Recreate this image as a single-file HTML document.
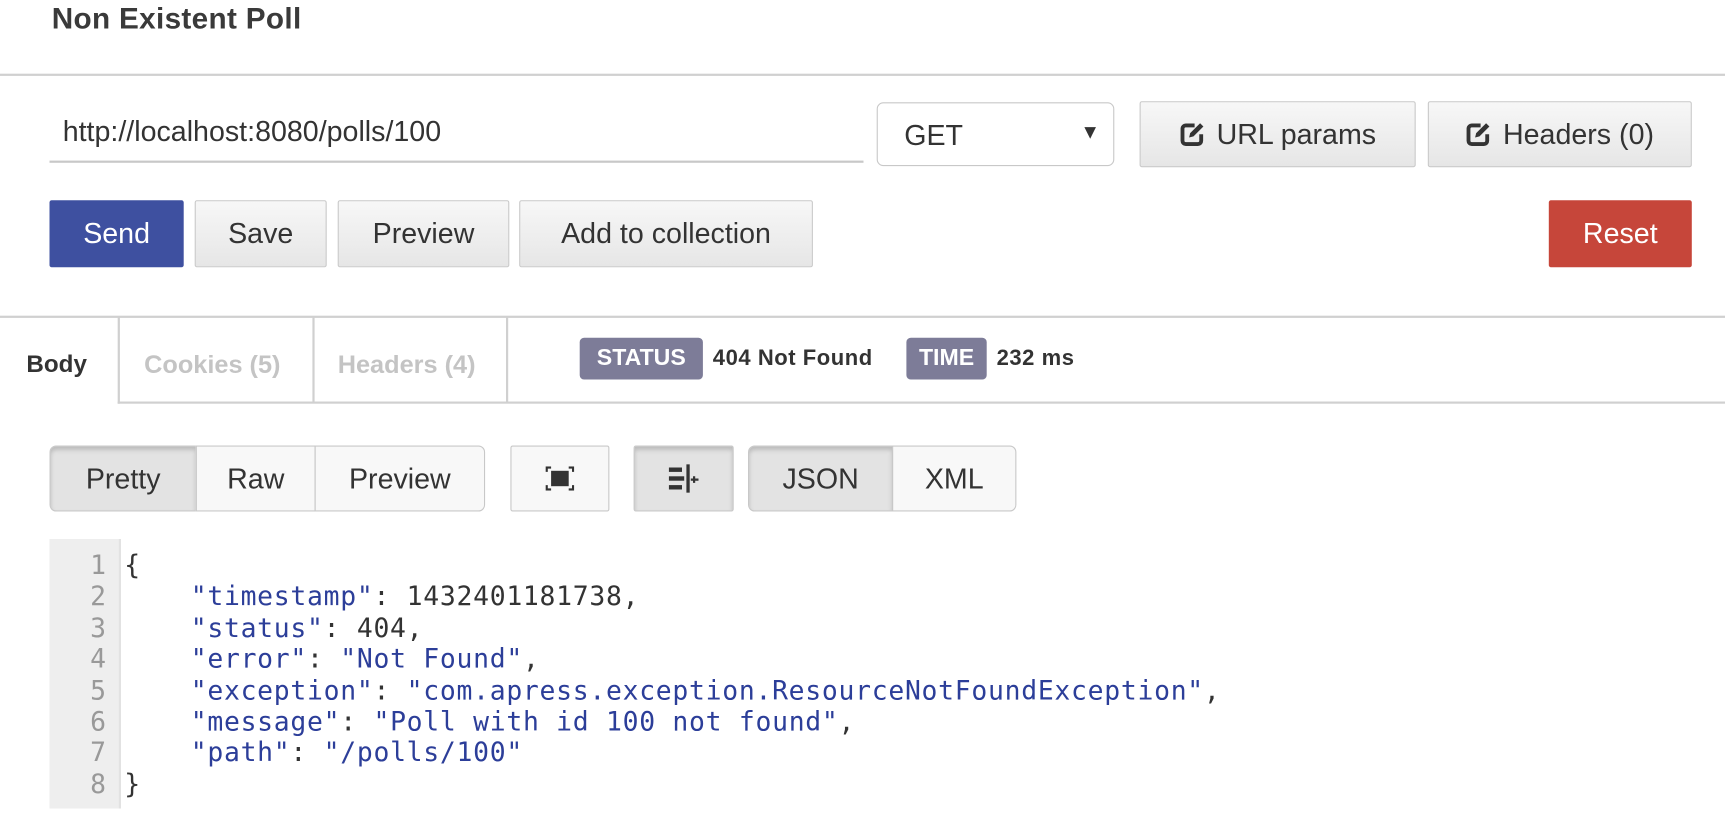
<!DOCTYPE html>
<html><head><meta charset="utf-8"><style>
*{box-sizing:border-box;margin:0;padding:0}
body{width:1725px;height:818px;background:#fff;font-family:"Liberation Sans",Arial,sans-serif;color:#333;position:relative;overflow:hidden}
#w{position:absolute;left:0;top:0;width:1569px;height:744px;transform:scale(1.1);transform-origin:0 0}
.a{position:absolute}
.btn{position:absolute;border:1px solid #c8c8c8;background:linear-gradient(#f7f7f7,#e6e6e6);font-size:26px;color:#333;display:flex;align-items:center;justify-content:center;border-radius:2px}
.hr{position:absolute;left:0;right:0;height:2px;background:#d0d0d0}
.code{font-family:"DejaVu Sans Mono","Liberation Mono",monospace;font-size:24px;letter-spacing:0.65px;line-height:28.4px;white-space:pre}
.k{color:#2c3e99}.n{color:#333}
</style></head><body><div id="w">
<div class="a" style="left:47px;top:2px;font-size:27px;font-weight:bold;color:#3a3a3a;letter-spacing:0.3px">Non Existent Poll</div>
<div class="hr" style="top:67px"></div>
<div class="a" style="left:57px;top:104px;font-size:26px;color:#333">http://localhost:8080/polls/100</div>
<div class="a" style="left:45px;top:146px;width:740px;height:2px;background:#c8c8c8"></div>
<div class="a" style="left:797px;top:93px;width:216px;height:58px;border:1px solid #c8c8c8;border-radius:6px;font-size:26px;padding:14px 0 0 24px">GET<span style="position:absolute;right:12px;top:16px;font-size:18px">▼</span></div>
<div class="btn" style="left:1036px;top:92px;width:251px;height:60px"><svg width="24" height="24" viewBox="0 0 24 24" style="margin-right:10px"><path d="M14 4H6a3 3 0 0 0-3 3v11a3 3 0 0 0 3 3h11a3 3 0 0 0 3-3v-6" fill="none" stroke="#333" stroke-width="3.5"/><path d="M9 15l1-4 9-9 3 3-9 9z" fill="#333"/></svg>URL params</div>
<div class="btn" style="left:1298px;top:92px;width:240px;height:60px"><svg width="24" height="24" viewBox="0 0 24 24" style="margin-right:10px"><path d="M14 4H6a3 3 0 0 0-3 3v11a3 3 0 0 0 3 3h11a3 3 0 0 0 3-3v-6" fill="none" stroke="#333" stroke-width="3.5"/><path d="M9 15l1-4 9-9 3 3-9 9z" fill="#333"/></svg>Headers (0)</div>
<div class="btn" style="left:45px;top:182px;width:122px;height:61px;background:#3e50a0;border-color:#3e50a0;color:#fff">Send</div>
<div class="btn" style="left:177px;top:182px;width:120px;height:61px">Save</div>
<div class="btn" style="left:307px;top:182px;width:156px;height:61px">Preview</div>
<div class="btn" style="left:472px;top:182px;width:267px;height:61px">Add to collection</div>
<div class="btn" style="left:1408px;top:182px;width:130px;height:61px;background:#c6463a;border-color:#c6463a;color:#fff">Reset</div>
<div class="hr" style="top:287px"></div>
<div class="a" style="left:24px;top:318px;font-size:22px;font-weight:bold;color:#333">Body</div>
<div class="a" style="left:107px;top:288px;width:1462px;height:79px;border-left:2px solid #d0d0d0;border-bottom:2px solid #d0d0d0"></div>
<div class="a" style="left:284px;top:288px;width:2px;height:77px;background:#d0d0d0"></div>
<div class="a" style="left:460px;top:288px;width:2px;height:77px;background:#d0d0d0"></div>
<div class="a" style="left:131px;top:318px;font-size:23px;color:#c4c4c4;font-weight:bold">Cookies (5)</div>
<div class="a" style="left:307px;top:318px;font-size:23px;color:#c4c4c4;font-weight:bold">Headers (4)</div>
<div class="a" style="left:527px;top:307px;width:112px;height:38px;background:#7d7c98;border-radius:4px;color:#fff;font-weight:bold;font-size:21px;display:flex;align-items:center;justify-content:center">STATUS</div>
<div class="a" style="left:648px;top:315px;font-size:20px;font-weight:bold;color:#333;letter-spacing:0.5px">404 Not Found</div>
<div class="a" style="left:824px;top:307px;width:73px;height:38px;background:#7d7c98;border-radius:4px;color:#fff;font-weight:bold;font-size:21px;display:flex;align-items:center;justify-content:center">TIME</div>
<div class="a" style="left:906px;top:315px;font-size:20px;font-weight:bold;color:#333;letter-spacing:0.5px">232 ms</div>
<div class="btn" style="left:45px;top:405px;width:134px;height:60px;background:#e3e3e3;border-radius:6px 0 0 6px;box-shadow:inset 0 3px 4px #bbb">Pretty</div>
<div class="btn" style="left:178px;top:405px;width:109px;height:60px;background:#f8f8f8;border-radius:0">Raw</div>
<div class="btn" style="left:286px;top:405px;width:155px;height:60px;background:#f8f8f8;border-radius:0 6px 6px 0">Preview</div>
<div class="btn" style="left:464px;top:405px;width:90px;height:60px;background:#f8f8f8"><svg width="26" height="22" viewBox="0 0 26 22"><rect x="5" y="4" width="16" height="14" fill="#333"/><path d="M1 5V1h4M21 1h4v4M1 17v4h4M21 21h4v-4" stroke="#333" stroke-width="2" fill="none"/></svg></div>
<div class="btn" style="left:576px;top:405px;width:91px;height:60px;background:#e3e3e3;box-shadow:inset 0 3px 4px #bbb"><svg width="28" height="26" viewBox="0 0 28 26"><rect x="0" y="3" width="12" height="4" fill="#333"/><rect x="0" y="11" width="14" height="4" fill="#333"/><rect x="0" y="19" width="12" height="4" fill="#333"/><rect x="16" y="0" width="3" height="26" fill="#333"/><path d="M20 14h7M23 11v6" stroke="#333" stroke-width="2"/></svg></div>
<div class="btn" style="left:680px;top:405px;width:132px;height:60px;background:#e3e3e3;border-radius:6px 0 0 6px;box-shadow:inset 0 3px 4px #bbb">JSON</div>
<div class="btn" style="left:811px;top:405px;width:113px;height:60px;background:#f8f8f8;border-radius:0 6px 6px 0">XML</div>
<div class="a" style="left:45px;top:490px;width:65px;height:245px;background:#eeeeee;border-right:2px solid #e2e2e2"></div>
<div class="a code" style="left:45px;top:500px;width:52px;text-align:right;color:#999">1
2
3
4
5
6
7
8</div>
<div class="a code n" style="left:113px;top:500px">{
    <span class="k">"timestamp"</span>: 1432401181738,
    <span class="k">"status"</span>: 404,
    <span class="k">"error"</span>: <span class="k">"Not Found"</span>,
    <span class="k">"exception"</span>: <span class="k">"com.apress.exception.ResourceNotFoundException"</span>,
    <span class="k">"message"</span>: <span class="k">"Poll with id 100 not found"</span>,
    <span class="k">"path"</span>: <span class="k">"/polls/100"</span>
}</div>
</div></body></html>
